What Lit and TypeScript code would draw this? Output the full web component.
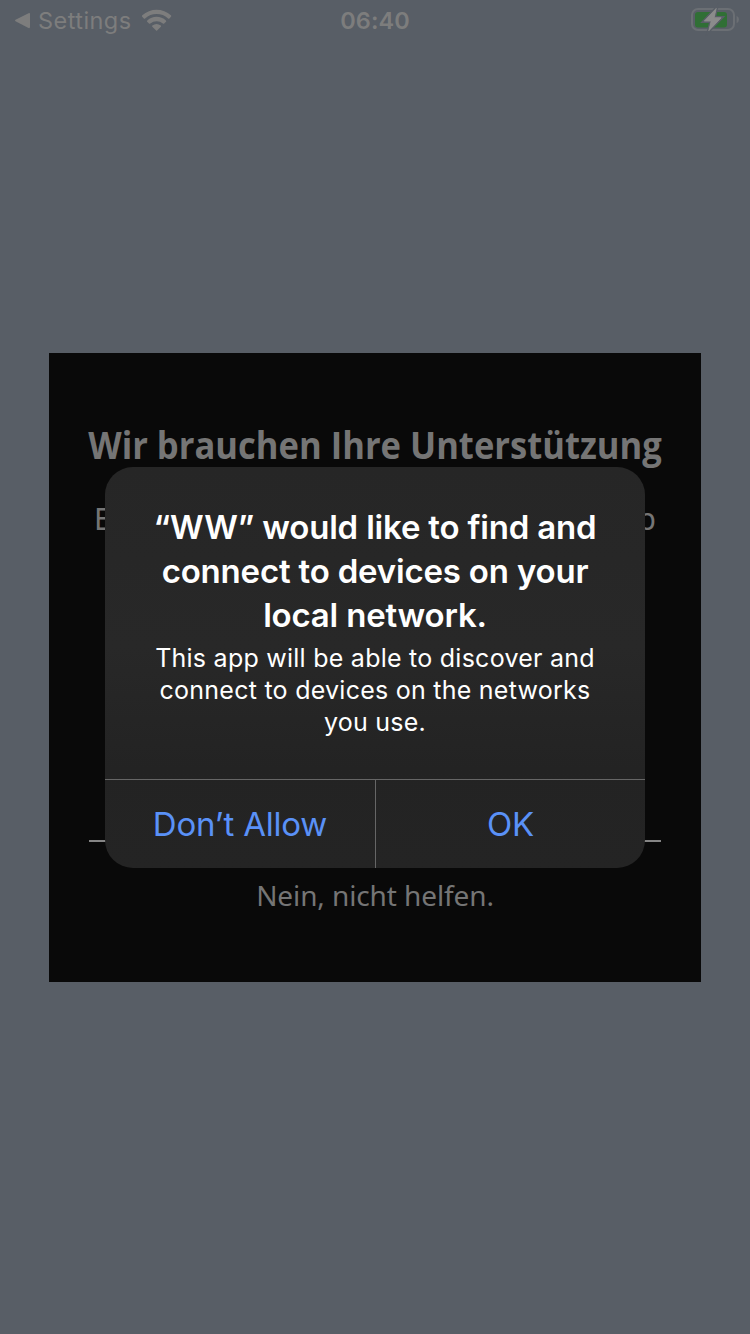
import { LitElement, html, css } from "lit";
import { customElement } from "lit/decorators.js";

@customElement("status-bar")
class StatusBar extends LitElement {
  static styles = css`
    :host { display: grid; grid-template-columns: 1fr auto 1fr; align-items: start; height: 40px;
      box-sizing: border-box; padding: 0 11px 0 14px; color: #7d7d7d;
      font: 400 23.5px/42px Inter, "Liberation Sans", sans-serif; }
    .left { display: flex; align-items: flex-start; height: 40px; }
    .back { margin-right: 7px; }
    .settings { letter-spacing: 0.45px; width: 95px; white-space: nowrap; }
    .wifi { margin-left: 2px; }
    .time { font-weight: 600; letter-spacing: 0.1px; margin-right: 3px; }
    .battery { justify-self: end; }
    svg { display: block; flex: none; }
  `;
  render() {
    return html`
      <div class="left">
        <svg class="back" width="17" height="40" viewBox="0 0 17 40"><path d="M1.5 19.8 Q0.3 20.5 1.5 21.2 L14.5 28 Q16 28.5 16 27 V14 Q16 12.5 14.5 13.2Z" fill="#7d7d7d"/></svg>
        <span class="settings">Settings</span>
        <svg class="wifi" width="40" height="40" viewBox="135 0 40 40" fill="#7d7d7d">
          <path d="M142.2 16.8 Q141.5 16 142.3 15.3 A21 21 0 0 1 170.9 15.3 Q171.7 16 171 16.8 L169.4 18.4 Q168.8 19 168.1 18.4 A17 17 0 0 0 145.1 18.4 Q144.4 19 143.8 18.4Z"/>
          <path d="M147.2 21.8 Q146.5 21.1 147.3 20.4 A14 14 0 0 1 165.9 20.4 Q166.7 21.1 166 21.8 L164.2 23.6 Q163.6 24.1 162.9 23.6 A9.8 9.8 0 0 0 150.3 23.6 Q149.6 24.1 149 23.6Z"/>
          <path d="M152.3 26.7 Q151.7 26.1 152.4 25.5 A7 7 0 0 1 160.8 25.5 Q161.5 26.1 160.9 26.7 L157.1 30.5 Q156.6 31 156.1 30.5Z"/>
        </svg>
      </div>
      <span class="time">06:40</span>
      <svg class="battery" width="50" height="40" viewBox="689 0 50 40">
        <rect x="692" y="9" width="42" height="21" rx="6" fill="none" stroke="#6b6f74" stroke-width="2"/>
        <path d="M736.6 15.8 Q739 17 739 19.5 Q739 22 736.6 23.2Z" fill="#6b6f74"/>
        <rect x="695" y="12" width="32" height="15.5" rx="3" fill="#306f35"/>
        <path d="M716.2 8.4 L704.3 21.1 H711.2 L708.8 30.7 L721.2 17.8 H714.1Z" fill="#8b8b8b" stroke="#585e66" stroke-width="3.6" paint-order="stroke"/>
        <path d="M716.2 8.4 L704.3 21.1 H711.2 L708.8 30.7 L721.2 17.8 H714.1Z" fill="#8b8b8b" stroke="#8b8b8b" stroke-width="0.8" stroke-linejoin="round"/>
      </svg>`;
  }
}

@customElement("support-card")
class SupportCard extends LitElement {
  static styles = css`
    :host { display: block; box-sizing: border-box; height: 629px; padding: 65px 40px 0;
      background: #090909; color: #757575; font-family: "Noto Sans", sans-serif; }
    .title { display: flex; justify-content: center; font-family: "Open Sans", "Noto Sans", sans-serif; font-size: 38px; line-height: 52px; font-weight: 700;
      white-space: nowrap; transform: scaleX(0.91); }
    .body { display: flex; justify-content: space-between; margin-top: 29px; padding: 0 5px 0 5px;
      font-size: 30px; line-height: 40px; }
    .rule { margin-top: 301px; height: 2px; background: #858585; }
    .decline { margin-top: 33px; text-align: center; font-size: 28px; line-height: 40px; letter-spacing: -0.1px; }
  `;
  render() {
    return html`
      <div class="title">Wir brauchen Ihre Unterstützung</div>
      <div class="body"><span>E</span><span>p</span></div>
      <div class="rule"></div>
      <div class="decline">Nein, nicht helfen.</div>`;
  }
}

@customElement("permission-alert")
class PermissionAlert extends LitElement {
  static styles = css`
    :host { display: flex; flex-direction: column; box-sizing: border-box; width: 540px; height: 401px;
      padding-top: 38px; border-radius: 28px; overflow: hidden; color: #fff; text-align: center;
      background: linear-gradient(#262626 0%, #282828 45%, #232323 75%, #242424 100%);
      font-family: Inter, "Liberation Sans", sans-serif; white-space: nowrap; }
    .title { font-size: 33px; line-height: 44px; font-weight: 600; letter-spacing: -0.19px; }
    .message { margin-top: 5px; font-size: 25px; line-height: 32px; letter-spacing: 0.25px; }
    .actions { display: grid; grid-template-columns: 270px 1fr; margin-top: 41px; height: 88px;
      border-top: 1px solid #666; color: #5a91f7; font-size: 33px; line-height: 88px; letter-spacing: -0.2px; }
    .ok { border-left: 1px solid #666; }
  `;
  render() {
    return html`
      <div class="title">
        <div>“WW” would like to find and</div>
        <div>connect to devices on your</div>
        <div>local network.</div>
      </div>
      <div class="message">
        <div>This app will be able to discover and</div>
        <div>connect to devices on the networks</div>
        <div>you use.</div>
      </div>
      <div class="actions"><div>Don’t Allow</div><div class="ok">OK</div></div>`;
  }
}

@customElement("app-root")
class AppRoot extends LitElement {
  static styles = css`
    :host { display: block; position: relative; width: 750px; height: 1334px; overflow: hidden; background: #585e66; }
    .card { margin: 313px 49px 0; }
    .alert { position: absolute; left: 105px; top: 467px; }
  `;
  render() {
    return html`
      <status-bar></status-bar>
      <support-card class="card"></support-card>
      <permission-alert class="alert"></permission-alert>`;
  }
}
